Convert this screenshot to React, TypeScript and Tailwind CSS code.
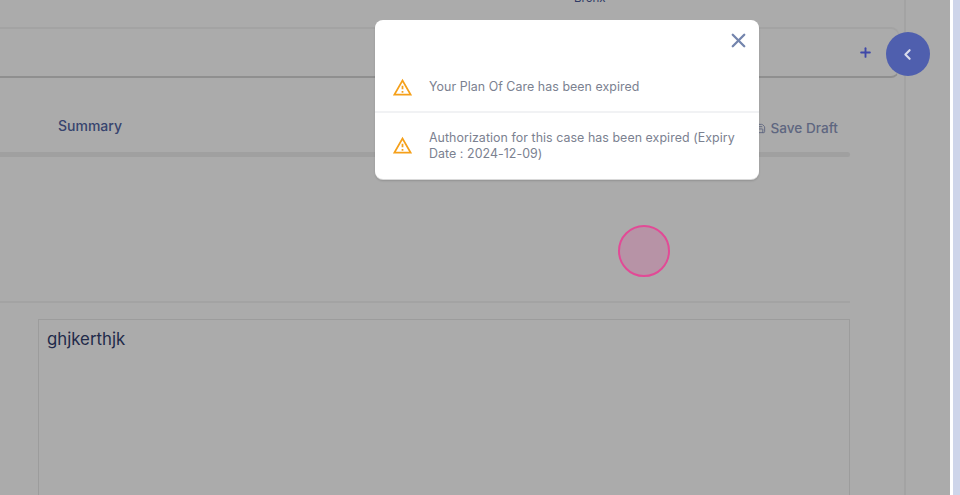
import { ChevronLeft, Plus, Save, X } from "lucide-react";

const font = "font-['Inter',sans-serif]";

function WarningIcon() {
  return (
    <svg viewBox="0 0 24 24" className="w-[21px] h-[21px] text-[#f5a01a] shrink-0" fill="currentColor">
      <path d="M12 5.99 19.53 19H4.47L12 5.99M12 2 1 21h22L12 2zm1 14h-2v2h2v-2zm0-6h-2v4h2v-4z" />
    </svg>
  );
}

function Notice({ children, rowClass, textClass }: { children: React.ReactNode; rowClass: string; textClass?: string }) {
  return (
    <div className={`flex items-center pl-[17px] pr-[16px] ${rowClass}`}>
      <WarningIcon />
      <p className={`ml-[16px] text-[12.4px] leading-[16px] text-[#7b8190] tracking-[0.06px] ${textClass ?? ""}`}>{children}</p>
    </div>
  );
}

export default function App() {
  return (
    <div className={`relative w-[960px] h-[495px] overflow-hidden flex bg-[#ced5ea] ${font}`}>
      <div className="w-[950px] h-full bg-[#ababab] flex shrink-0">
        <div className="w-[906px] h-full border-r-2 border-r-[#a3a3a3] shrink-0">
          <div className="h-[27px] overflow-hidden">
            <p className="ml-[574px] -mt-[9px] text-[11.5px] leading-[14px] text-[#2f3a66]">Bronx</p>
          </div>
          <div className="w-[899px] h-[51px] border-t-2 border-b-2 border-r border-t-[#a3a3a3] border-b-[#8f8f8f] border-r-[#a3a3a3] rounded-r-[8px] flex items-center justify-end pr-[25px]">
            <Plus className="w-[15px] h-[15px] text-[#3f48a8]" strokeWidth={3} />
          </div>
          <div className="w-[850px] h-[74px] flex items-start justify-between">
            <p className="ml-[58px] mt-[39px] text-[14px] leading-[18px] font-medium text-[#37446e]">Summary</p>
            <div className="flex items-center mt-[41px] mr-[12px]">
              <Save className="w-[11px] h-[11px] text-[#5e6680]" />
              <span className="ml-[5px] text-[13.6px] leading-[18px] font-medium text-[#5e6680]">Save Draft</span>
            </div>
          </div>
          <div className="w-[850px] h-[5px] bg-[#a0a0a0] rounded-r-full" />
          <div className="w-[850px] h-[146px] border-b-2 border-b-[#a3a3a3]" />
          <div className="ml-[38px] mt-[16px] w-[812px] h-[300px] border border-[#9c9c9c] pl-[8px] pt-[7px]">
            <p className="text-[16.8px] leading-[24px] text-[#1f2a4a]">ghjkerthjk</p>
          </div>
        </div>
      </div>
      <div className="w-[3px] h-full bg-white shrink-0" />

      <button className="absolute left-[886px] top-[32px] w-[44px] h-[44px] rounded-full bg-[#4f5fae] flex items-center justify-center pr-[2px]">
        <ChevronLeft className="w-[17px] h-[17px] text-[#d9dcec]" strokeWidth={3} />
      </button>

      <div className="absolute left-[618px] top-[225px] w-[52px] h-[52px] rounded-full border-[2.5px] border-[#e24a96] bg-[#b793a6]" />

      <div className="absolute left-[375px] top-[20px] w-[384px] h-[159px] rounded-[8px] bg-white shadow-[0_1px_0_#d9d9d9,0_2px_2px_rgba(0,0,0,0.15)] flex flex-col">
        <div className="h-[43px] flex justify-end pt-[9px] pr-[9px]">
          <X className="w-[23px] h-[23px] text-[#7485ad]" strokeWidth={2.4} />
        </div>
        <Notice rowClass="h-[50px] border-b-2 border-b-[#f1f2f4]">Your Plan Of Care has been expired</Notice>
        <Notice rowClass="h-[64px]" textClass="mt-[2px]">
          Authorization for this case has been expired (Expiry Date : 2024-12-09)
        </Notice>
      </div>
    </div>
  );
}
